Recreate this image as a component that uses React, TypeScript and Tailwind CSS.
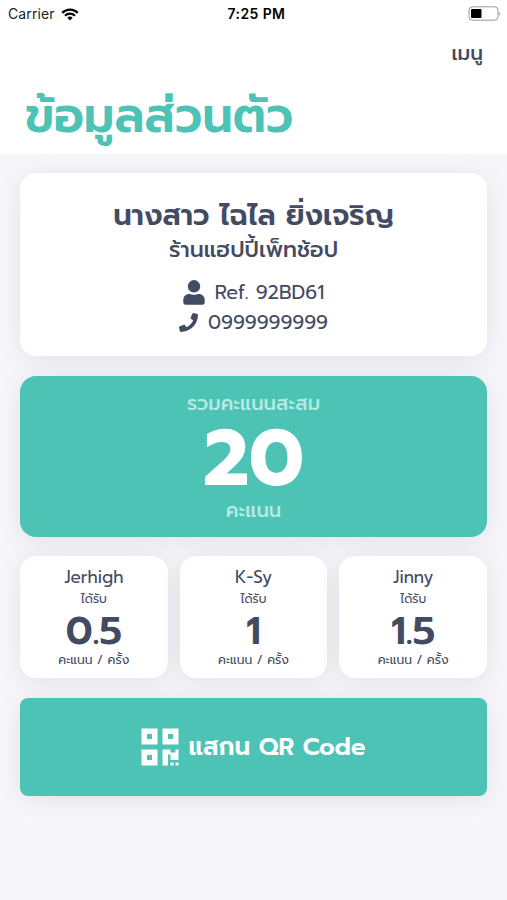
import React from "react";
import { FaPhone } from "react-icons/fa";

const brands = [
  { name: "Jerhigh", points: "0.5" },
  { name: "K-Sy", points: "1" },
  { name: "Jinny", points: "1.5" },
];

const cardShadow = "shadow-[0_3px_24px_rgba(67,75,98,0.12)]";

function StatusBar() {
  return (
    <div className="grid h-7 grid-cols-3 items-center pl-2 pr-[6px] font-['Inter','Liberation_Sans',sans-serif] text-black">
      <div className="flex items-center gap-[6px]">
        <span className="text-[14px] leading-[18px] tracking-[0.1px] text-[#222]">Carrier</span>
        <svg width="18" height="13" viewBox="0 0 18 13" fill="none" stroke="currentColor" strokeWidth="2.3">
          <path d="M1.2 4.9a11 11 0 0 1 15.6 0" />
          <path d="M4 7.8a7 7 0 0 1 10 0" />
          <path d="M9 12.6 6.3 9.8a3.8 3.8 0 0 1 5.4 0z" fill="currentColor" stroke="none" />
        </svg>
      </div>
      <span className="pl-1 text-center text-[14px] font-semibold leading-[18px] tracking-[0.4px]">7:25 PM</span>
      <svg className="-mt-[2px] justify-self-end" width="33" height="15" viewBox="0 0 33 15">
        <rect x="1" y=".8" width="29" height="13.4" rx="3.5" fill="white" stroke="#999" />
        <rect x="3" y="3" width="10.5" height="9" rx="1" fill="#000" />
        <path d="M31.2 5.2q1.5 2.3 0 4.6z" fill="#888" />
      </svg>
    </div>
  );
}

function PersonIcon() {
  return (
    <svg width="22" height="25" viewBox="0 0 22 25" fill="currentColor">
      <circle cx="11" cy="6.3" r="6.2" />
      <path d="M6.3 14c1.5 0 2.4.8 4.7.8s3.2-.8 4.7-.8c3.5 0 6 2.5 6 6v2.5c0 1.3-.9 2.2-2.2 2.2h-17C1.200 24.700.3 23.800.3 22.500V20c0-3.500 2.500-6 6-6z" />
    </svg>
  );
}

function QrIcon() {
  return (
    <svg width="38" height="38" viewBox="0 0 38 38" fill="currentColor" fillRule="evenodd">
      <path d="M.5.5h16v16H.5zM6 6v5h5V6zM21.500.5h16v16h-16zM27 6v5h5V6zM.5 21.500h16v16H.5zM6 27v5h5v-5z" />
      <path d="M21.500 21.500h8v3h5v-3h3v10.500h-8v-5.500h-2.500v11h-5.500zM29.500 34.500h3v3h-3zM34.500 34.500h3v3h-3z" />
    </svg>
  );
}

export default function App() {
  return (
    <div className="flex h-[900px] w-[507px] flex-col overflow-hidden bg-[#f7f7fa] font-['Prompt','Noto_Sans_Thai','Noto_Sans',sans-serif] text-[#434b62]">
      <header className="h-[154px] shrink-0 bg-white">
        <StatusBar />
        <div className="flex h-[50px] items-center justify-end pr-6 text-[20px] font-medium leading-[30px]">เมนู</div>
        <h1 className="flex h-[76px] items-center whitespace-nowrap pl-[25px] text-[48px] font-semibold leading-[72px] text-[#4dc3b6]">
          ข้อมูลส่วนตัว
        </h1>
      </header>

      <main className="flex flex-col px-5 pt-[19px] text-center">
        <section className={`flex h-[183px] flex-col items-center rounded-2xl bg-white pt-[20px] ${cardShadow}`}>
          <h2 className="whitespace-nowrap text-[29px] font-semibold leading-[44px]">นางสาว ไฉไล ยิ่งเจริญ</h2>
          <p className="whitespace-nowrap text-[22px] font-medium leading-[26px]">ร้านแฮปปี้เพ็ทช้อป</p>
          <div className="mt-[14px] flex h-[30px] items-center gap-[10px]">
            <PersonIcon />
            <span className="text-[19.5px] leading-[29px]">Ref. 92BD61</span>
          </div>
          <div className="flex h-[30px] items-center gap-[10px]">
            <FaPhone className="size-[19px]" />
            <span className="text-[19.5px] leading-[29px]">0999999999</span>
          </div>
        </section>

        <section className={`mt-5 flex h-[161px] flex-col items-center rounded-2xl bg-[#4dc3b6] pt-[13px] ${cardShadow}`}>
          <p className="text-[19.5px] font-medium leading-[30px] text-[#b5ebe3]">รวมคะแนนสะสม</p>
          <p className="text-[79px] font-bold leading-[80px] text-white">20</p>
          <p className="text-[19.5px] font-medium leading-[24px] text-[#b5ebe3]">คะแนน</p>
        </section>

        <section className="mt-[19px] grid grid-cols-3 gap-3">
          {brands.map((brand) => (
            <article key={brand.name} className={`flex h-[122px] flex-col items-center rounded-2xl bg-white pt-[10px] ${cardShadow}`}>
              <h3 className="text-[17px] leading-[22px]">{brand.name}</h3>
              <p className="text-[12px] leading-[22px]">ได้รับ</p>
              <p className="text-[39px] font-semibold leading-[42px]">{brand.points}</p>
              <p className="text-[12.3px] leading-[16px]">คะแนน / ครั้ง</p>
            </article>
          ))}
        </section>

        <button className={`mt-5 flex h-[98px] items-center justify-center gap-[9px] rounded-lg bg-[#4dc3b6] text-white ${cardShadow}`}>
          <QrIcon />
          <span className="whitespace-nowrap text-[24.5px] font-semibold leading-[36px]">แสกน QR Code</span>
        </button>
      </main>
    </div>
  );
}
